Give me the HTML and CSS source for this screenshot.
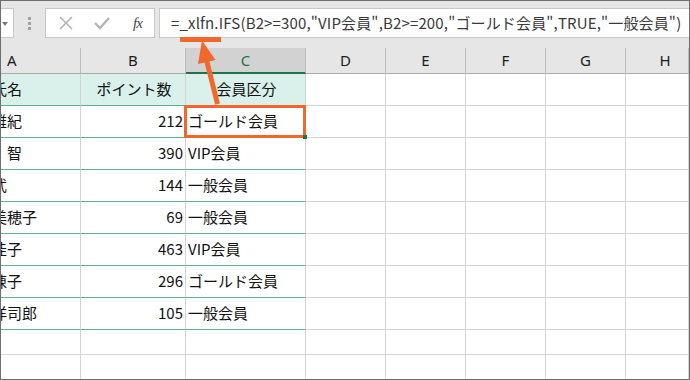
FILE: index.html
```html
<!DOCTYPE html>
<html lang="ja">

<head>
    <meta charset="utf-8">
    <title>IFS関数</title>

    <link rel="stylesheet" href="styles.css">

</head>

<body>

    <div class="frame">

        <div class="fbar">
            <div class="namebox"><span class="drop"></span></div>
            <div class="grip"><i></i><i></i><i></i></div>
            <div class="fnbox">
                <svg class="ico" width="16" height="14" viewBox="0 0 16 14">
                    <path d="M2 1 L14 13 M14 1 L2 13" stroke="#b4b4b4" stroke-width="1.6" fill="none" />
                </svg>
                <svg class="ico" width="18" height="14" viewBox="0 0 18 14">
                    <path d="M2 7 L7 12 L16 2" stroke="#b4b4b4" stroke-width="2.4" fill="none" />
                </svg>
                <span class="fx">fx</span>
            </div>
            <div class="input">=_xlfn.IFS(B2&gt;=300,"VIP会員",B2&gt;=200,"ゴールド会員",TRUE,"一般会員")</div>
        </div>

        <div class="colhead">
            <div class="ch ch-a">A</div>
            <div class="ch">B</div>
            <div class="ch sel">C</div>
            <div class="ch">D</div>
            <div class="ch">E</div>
            <div class="ch">F</div>
            <div class="ch">G</div>
            <div class="ch ch-h">H</div>
        </div>

        <section class="sheet"></section>

        <div class="under"></div>
        <div class="cellmark"></div>
        <div class="handle"></div>

        <svg class="arrow" width="690" height="380" viewBox="0 0 690 380">
            <line x1="217.5" y1="104" x2="206.5" y2="60" stroke="#f0682c" stroke-width="5" />
            <polygon points="202,40.5 215.5,60 198,64" fill="#f0682c" />
        </svg>

    </div>

    <template>
        <div class="c name"></div>
        <div class="c num"></div>
        <div class="c rank"></div>
    </template>


    <script>
        const rows = [
            ["氏名", "ポイント数", "会員区分"],
            ["雅紀", "212", "ゴールド会員"],
            ["　智", "390", "VIP会員"],
            ["武", "144", "一般会員"],
            ["美穂子", "69", "一般会員"],
            ["佳子", "463", "VIP会員"],
            ["陳子", "296", "ゴールド会員"],
            ["洋司郎", "105", "一般会員"],
            ["", "", ""],
            ["", "", ""],
            ["", "", ""]
        ];

        const sheet = document.querySelector(".sheet");
        const tpl = document.querySelector("template");

        rows.forEach((row, i) => {
            let klon = tpl.cloneNode(true).content;
            let cells = klon.querySelectorAll(".c");
            cells.forEach((cell, n) => {
                cell.textContent = row[n];
                if (i == 0) cell.classList.add("head");
                if (i < 8) cell.classList.add("data");
            });
            sheet.appendChild(klon);

            // tomme kolonner D-H
            for (let k = 0; k < 5; k++) {
                let tom = document.createElement("div");
                tom.className = "c";
                sheet.appendChild(tom);
            }
        });
    </script>
</body>

</html>
```

FILE: styles.css
```css
* {
    box-sizing: border-box;
}

html,
body {
    margin: 0;
}

body {
    background-color: white;
    font-family: "Noto Sans CJK JP", sans-serif;
}

.frame {
    position: relative;
    width: 690px;
    height: 380px;
    border: 1px solid #6e6e6e;
    overflow: hidden;
    background-color: white;
}

/* formellinje */

.fbar {
    height: 47px;
    padding-top: 7px;
    display: flex;
    align-items: flex-start;
    background-color: #e6e6e6;
}

.namebox {
    position: relative;
    width: 13px;
    height: 30px;
    background-color: white;
    border: 1px solid #c8c8c8;
    border-left: 0;
}

.drop {
    position: absolute;
    left: 1px;
    top: 13px;
    border-left: 3px solid transparent;
    border-right: 3px solid transparent;
    border-top: 4px solid #777;
}

.grip {
    width: 31px;
    height: 30px;
    display: flex;
    flex-direction: column;
    align-items: center;
    justify-content: center;
    gap: 2px;
}

.grip i {
    width: 3px;
    height: 3px;
    background-color: #a0a0a0;
}

.fnbox {
    width: 110px;
    height: 30px;
    display: flex;
    align-items: center;
    padding-left: 12px;
    background-color: white;
    border: 1px solid #c8c8c8;
}

.ico {
    margin-right: 19px;
}

.ico+.ico {
    margin-right: 22px;
}

.fx {
    font-family: "Liberation Serif", serif;
    font-style: italic;
    font-size: 15px;
    color: #444;
    letter-spacing: -1px;
}

.input {
    flex: 1;
    height: 30px;
    margin-left: 4px;
    padding-left: 11px;
    line-height: 28px;
    font-size: 15px;
    letter-spacing: 0.15px;
    color: #3a3a3a;
    white-space: nowrap;
    overflow: hidden;
    background-color: white;
    border: 1px solid #c8c8c8;
    border-right: 0;
}

/* kolonneoverskrifter */

.colhead,
.sheet {
    display: grid;
    grid-template-columns: 80px 105px 120px 80px 80px 80px 80px 63px;
}

.colhead {
    height: 26px;
    background-color: #e6e6e6;
}

.ch {
    padding-top: 1px;
    text-align: center;
    font-family: "Noto Sans", sans-serif;
    font-size: 15px;
    line-height: 23px;
    color: #1b1b1b;
    border-right: 1px solid #bdbdbd;
    border-bottom: 1px solid #ababab;
}

.ch-a {
    text-align: left;
    padding-left: 6px;
}

.ch-h {
    padding-left: 16px;
}

.sel {
    background-color: #d2d2d2;
    color: #217346;
    border-bottom: 2px solid #217346;
}

/* celler */

.sheet {
    grid-template-rows: repeat(8, 32px) 25px 25px 25px;
}

.c {
    display: flex;
    align-items: center;
    padding-bottom: 3px;
    font-size: 15px;
    color: #111;
    white-space: nowrap;
    overflow: hidden;
    border-right: 1px solid #d4d4d4;
    border-bottom: 1px solid #d4d4d4;
}

.data {
    border-bottom-color: #5fae8e;
}

.head {
    background-color: #d9f1ea;
}

.name.data {
    text-indent: -9px;
}

.num {
    justify-content: flex-end;
    padding-right: 2px;
}

.rank {
    padding-left: 2px;
}

.num.head,
.rank.head {
    justify-content: center;
    padding-left: 2px;
    padding-right: 0;
}

/* markeringer */

.under {
    position: absolute;
    left: 179px;
    top: 36px;
    width: 41px;
    height: 5px;
    background-color: #f0682c;
}

.cellmark {
    position: absolute;
    left: 183px;
    top: 104px;
    width: 122px;
    height: 33px;
    border: 3px solid #f0682c;
}

.handle {
    position: absolute;
    left: 302px;
    top: 134px;
    width: 4px;
    height: 4px;
    background-color: #217346;
}

.arrow {
    position: absolute;
    left: -1px;
    top: -1px;
}
```
